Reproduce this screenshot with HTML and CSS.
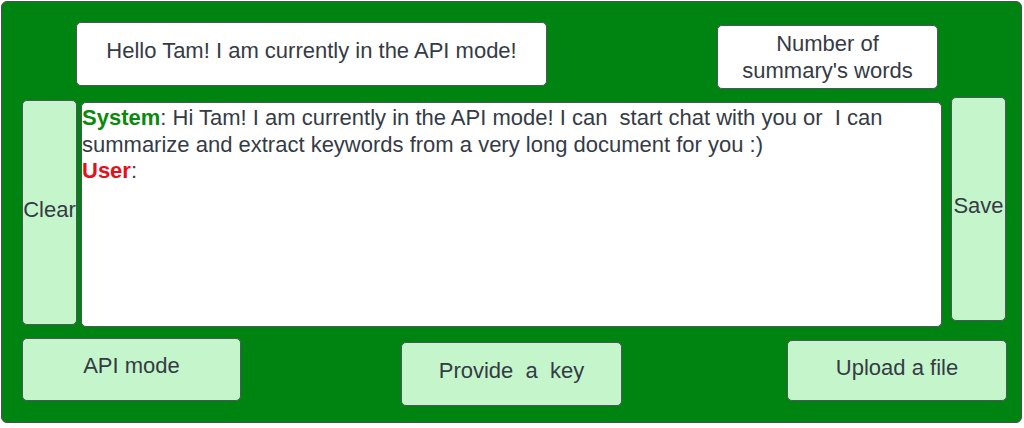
FILE: index.html
```html
<!DOCTYPE html>
<html>
<head>
<meta charset="utf-8">
<link rel="stylesheet" href="styles.css">
</head>
<body>
<div class="panel">
  <div class="row row-top">
    <div class="box hello">Hello Tam! I am currently in the API mode!</div>
    <div class="box words">Number of<br>summary's words</div>
  </div>
  <div class="row row-mid">
    <div class="btn clear">Clear</div>
    <div class="chat">
      <p class="line"><span class="sys">System</span>: Hi Tam! I am currently in the API mode! I can &nbsp;start chat with you or &nbsp;I can summarize and extract keywords from a very long document for you :)</p>
      <p class="line"><span class="usr">User</span>:</p>
    </div>
    <div class="btn save">Save</div>
  </div>
  <div class="row row-bot">
    <div class="btn api">API mode</div>
    <div class="btn key">Provide &nbsp;a &nbsp;key</div>
    <div class="btn upload">Upload a file</div>
  </div>
</div>
</body>
</html>
```

FILE: styles.css
```css
* { box-sizing: border-box; }
html, body { margin: 0; padding: 0; background: #ffffff; }
body {
  font-family: "Liberation Sans", Arial, sans-serif;
  color: #353b46;
}
.panel {
  margin: 1px 0 0 1px;
  width: 1021px;
  height: 422px;
  background: #008411;
  border: 1px solid #4a4f55;
  border-radius: 6px;
}
.row { display: flex; align-items: flex-start; }
.row-top { height: 95px; }
.row-mid { height: 238px; }
.row-bot { height: 80px; }

.box, .btn {
  border: 1px solid #4f555c;
  border-radius: 5px;
  display: flex;
  align-items: center;
  justify-content: center;
  text-align: center;
  font-size: 22px;
  white-space: nowrap;
}
.box { background: #ffffff; }
.btn { background: #c5f6cb; }

.hello { margin: 20px 0 0 74px; width: 471px; height: 64px; padding-bottom: 6px; }
.words { margin: 23px 0 0 170px; width: 221px; height: 64px; line-height: 27px; padding-bottom: 1px; }

.clear { margin: 3px 0 0 20px; width: 55px; height: 225px; padding-bottom: 6px; }
.chat {
  margin: 5px 0 0 4px;
  width: 861px;
  height: 225px;
  background: #ffffff;
  border: 1px solid #4f555c;
  border-radius: 5px;
  font-size: 22px;
  line-height: 26.5px;
  padding: 2px 0 0 0;
}
.line { margin: 0; }
.sys { color: #0a8a0a; font-weight: bold; }
.usr { color: #e4101c; font-weight: bold; }
.save { margin: 0 0 0 9px; width: 55px; height: 224px; padding-bottom: 6px; }

.api { margin: 3px 0 0 20px; width: 219px; height: 63px; padding-bottom: 7px; }
.key { margin: 7px 0 0 160px; width: 221px; height: 64px; padding-bottom: 6px; }
.upload { margin: 5px 0 0 165px; width: 220px; height: 61px; padding-bottom: 6px; }
```
